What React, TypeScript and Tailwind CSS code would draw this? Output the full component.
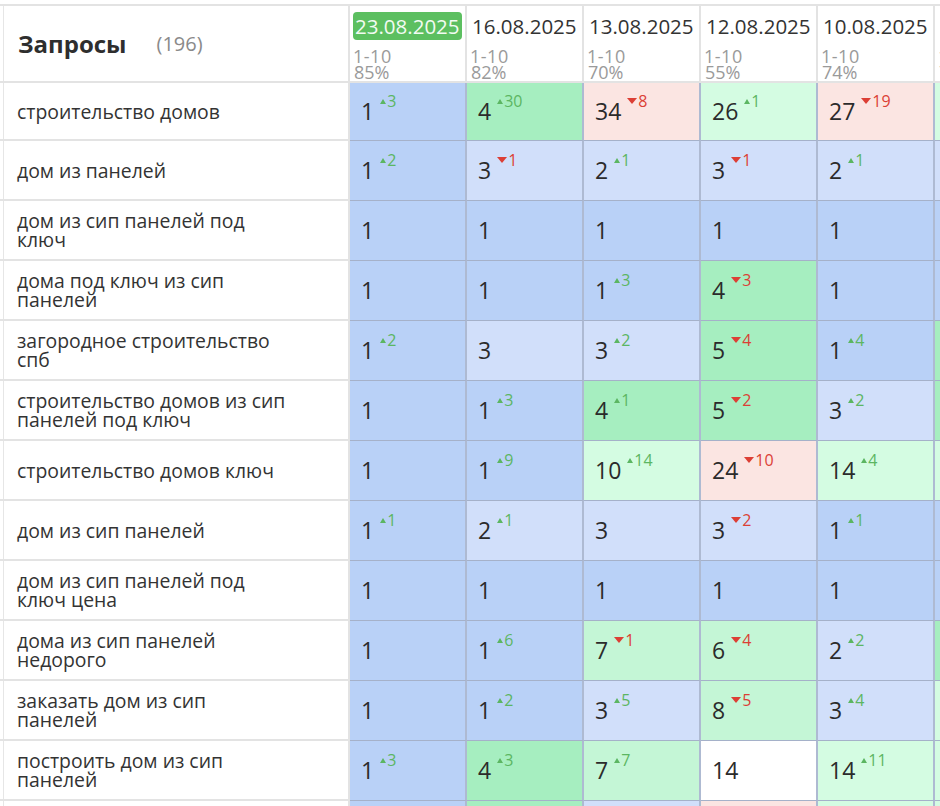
import React from "react";

type Cell = [number, number, string];

const B = "bg-[#b9d1f7]";
const L = "bg-[#d1dffa]";
const G = "bg-[#a6eec0]";
const MG = "bg-[#c4f6d6]";
const M = "bg-[#d4fce2]";
const P = "bg-[#fbe5e2]";
const W = "bg-white";

const DATES = [
  { date: "23.08.2025", range: "1-10", pct: "85%", current: true },
  { date: "16.08.2025", range: "1-10", pct: "82%" },
  { date: "13.08.2025", range: "1-10", pct: "70%" },
  { date: "12.08.2025", range: "1-10", pct: "55%" },
  { date: "10.08.2025", range: "1-10", pct: "74%" },
  { date: "09.08.2025", range: "1-10", pct: "71%" },
];

const ROWS: { label: string[]; cells: Cell[] }[] = [
  { label: ["строительство домов"], cells: [[1, 3, B], [4, 30, G], [34, -8, P], [26, 1, M], [27, -19, P], [20, 0, M]] },
  { label: ["дом из панелей"], cells: [[1, 2, B], [3, -1, L], [2, 1, L], [3, -1, L], [2, 1, L], [2, 0, L]] },
  { label: ["дом из сип панелей под", "ключ"], cells: [[1, 0, B], [1, 0, B], [1, 0, B], [1, 0, B], [1, 0, B], [1, 0, B]] },
  { label: ["дома под ключ из сип", "панелей"], cells: [[1, 0, B], [1, 0, B], [1, 3, B], [4, -3, G], [1, 0, B], [1, 0, B]] },
  { label: ["загородное строительство", "спб"], cells: [[1, 2, B], [3, 0, L], [3, 2, L], [5, -4, G], [1, 4, B], [5, 0, G]] },
  { label: ["строительство домов из сип", "панелей под ключ"], cells: [[1, 0, B], [1, 3, B], [4, 1, G], [5, -2, G], [3, 2, L], [5, 0, G]] },
  { label: ["строительство домов ключ"], cells: [[1, 0, B], [1, 9, B], [10, 14, M], [24, -10, P], [14, 4, M], [18, 0, M]] },
  { label: ["дом из сип панелей"], cells: [[1, 1, B], [2, 1, L], [3, 0, L], [3, -2, L], [1, 1, B], [1, 0, B]] },
  { label: ["дом из сип панелей под", "ключ цена"], cells: [[1, 0, B], [1, 0, B], [1, 0, B], [1, 0, B], [1, 0, B], [1, 0, B]] },
  { label: ["дома из сип панелей", "недорого"], cells: [[1, 0, B], [1, 6, B], [7, -1, MG], [6, -4, MG], [2, 2, L], [4, 0, G]] },
  { label: ["заказать дом из сип", "панелей"], cells: [[1, 0, B], [1, 2, B], [3, 5, L], [8, -5, MG], [3, 4, L], [7, 0, M]] },
  { label: ["построить дом из сип", "панелей"], cells: [[1, 3, B], [4, 3, G], [7, 7, MG], [14, 0, W], [14, 11, M], [25, 0, M]] },
  { label: ["дом из сип панелей цена"], cells: [[1, 0, B], [4, 0, G], [3, 0, L], [26, 0, P], [14, 0, M], [15, 0, M]] },
];

function Delta({ value }: { value: number }) {
  if (!value) return null;
  const up = value > 0;
  return (
    <span
      className={`ml-[6px] -mt-[7px] flex items-center gap-[1px] text-[16px] leading-none ${
        up ? "text-[#5cb662]" : "text-[#dc3f35]"
      }`}
    >
      {up ? (
        <svg width="6" height="5" viewBox="0 0 6 5">
          <path d="M3 0L6 5H0Z" fill="#5cb662" />
        </svg>
      ) : (
        <svg width="10" height="6" viewBox="0 0 10 6">
          <path d="M0 0H10L5 6Z" fill="#dc3f35" />
        </svg>
      )}
      {Math.abs(value)}
    </span>
  );
}

export default function App() {
  return (
    <div className="w-[940px] h-[806px] overflow-hidden bg-white font-['Open_Sans',sans-serif] text-[#333]">
      <div className="pt-[4px]">
        <div className="grid w-max grid-cols-[350px_repeat(6,117px)] border-t-2 border-[#e3e3e3]">
          {/* header */}
          <div className="h-[77px] border-b-2 border-r-2 border-[#e3e3e3] pl-[3px]">
            <div className="flex h-full items-center gap-[30px] border-l border-[#e6e6e6] pl-[14px]">
              <span className="text-[24px] font-bold text-[#2e2e2e]">Запросы</span>
              <span className="text-[20px] text-[#8a8a8a]">(196)</span>
            </div>
          </div>
          {DATES.map((d) => (
            <div key={d.date} className="flex h-[77px] flex-col overflow-hidden border-b-2 border-r-2 border-[#e3e3e3] pl-[3px] pt-[6px]">
              <div className="flex h-[28px] items-center">
                <span
                  className={`rounded-[4px] px-[2px] text-[20.5px] leading-[28px] ${
                    d.current ? "bg-[#5cbf60] text-[#f2fbf2]" : "text-[#333]"
                  }`}
                >
                  {d.date}
                </span>
              </div>
              <div className="mt-[8px] text-[18px] leading-[16px] tracking-[0.5px] text-[#9a9a9a]">{d.range}</div>
              <div className="pl-[1px] text-[18px] leading-[16px] text-[#9a9a9a]">{d.pct}</div>
            </div>
          ))}

          {/* rows */}
          {ROWS.map((row, i) => (
            <React.Fragment key={i}>
              <div className={`${i === 0 ? "h-[58px]" : "h-[60px]"} border-b-2 border-r-2 border-[#e3e3e3] pl-[3px]`}>
                <div className="flex h-full flex-col justify-center border-l border-[#e6e6e6] pl-[13px] text-[19.4px] leading-[19px] text-[#333]">
                  {row.label.map((l) => (
                    <span key={l} className="whitespace-nowrap">
                      {l}
                    </span>
                  ))}
                </div>
              </div>
              {row.cells.map(([v, d, bg], j) => (
                <div
                  key={j}
                  className={`${i === 0 ? "h-[58px]" : "h-[60px]"} ${bg} flex items-center border-b border-r-2 border-b-[#a5b1c9] border-r-[#aebad2] pl-[11px]`}
                >
                  <div className="flex items-start">
                    <span className="text-[23px] leading-none text-[#2b2b2b]">{v}</span>
                    <Delta value={d} />
                  </div>
                </div>
              ))}
            </React.Fragment>
          ))}
        </div>
      </div>
    </div>
  );
}
